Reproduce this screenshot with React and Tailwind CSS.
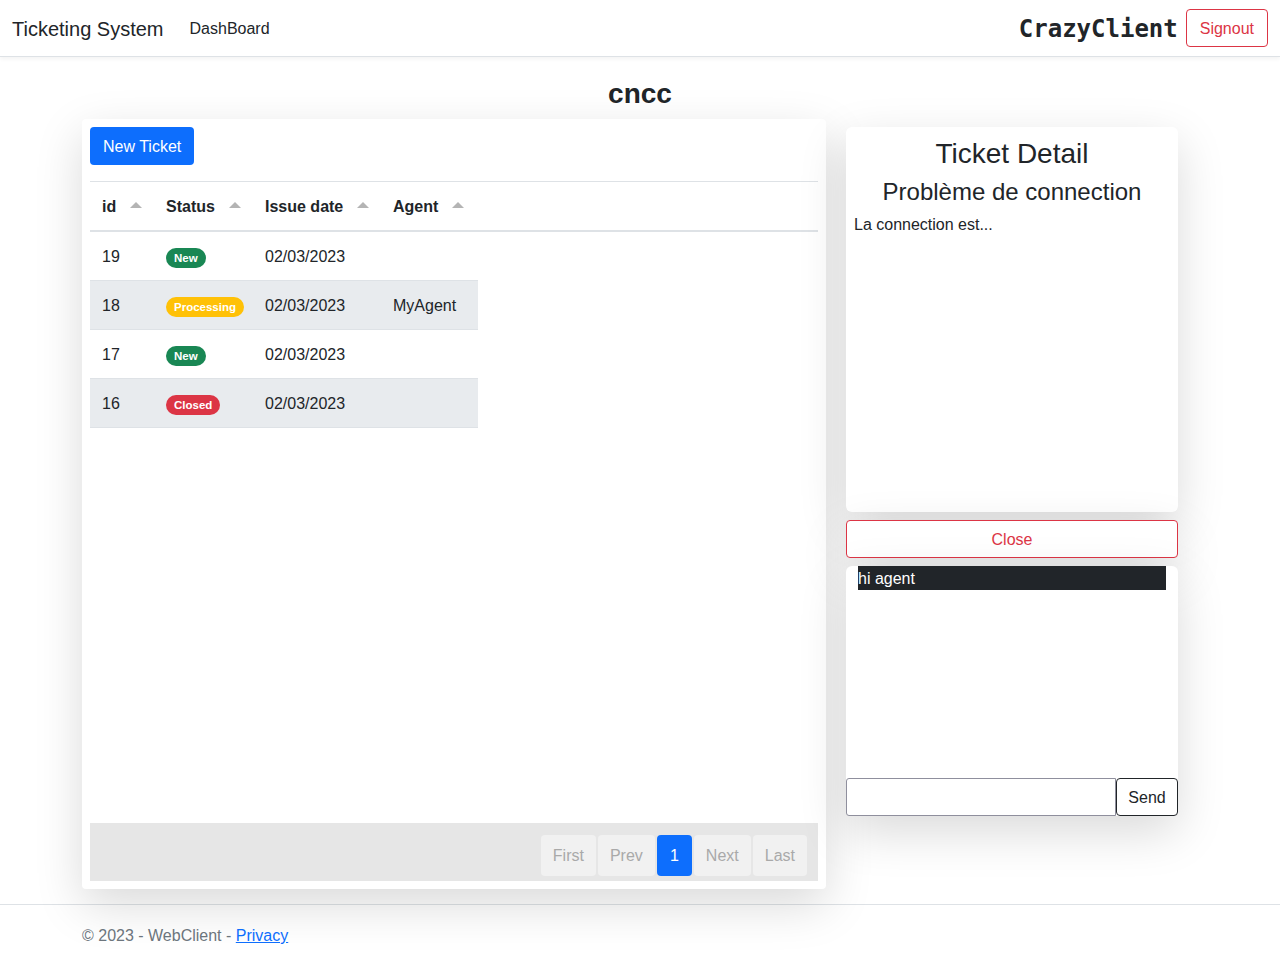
import React from 'react';

const rows = [
  { id: 19, status: 'New', date: '02/03/2023', agent: '' },
  { id: 18, status: 'Processing', date: '02/03/2023', agent: 'MyAgent' },
  { id: 17, status: 'New', date: '02/03/2023', agent: '' },
  { id: 16, status: 'Closed', date: '02/03/2023', agent: '' },
];

const badgeClass = {
  New: 'bg-[#198754]',
  Processing: 'bg-[#ffc107]',
  Closed: 'bg-[#dc3545]',
};

function SortArrow() {
  return (
    <span className="inline-block ml-[14px] align-middle w-0 h-0 border-l-[6px] border-r-[6px] border-b-[6px] border-l-transparent border-r-transparent border-b-[#b4b4b4] relative -top-[2px]" />
  );
}

export default function App() {
  return (
    <div className="min-h-screen bg-white text-[#212529] font-['Liberation_Sans',Arial,sans-serif] text-base">
      {/* Navbar */}
      <nav className="h-[57px] flex items-center justify-between px-3 border-b border-[#dee2e6] shadow-[0_2px_4px_rgba(0,0,0,0.05)]">
        <div className="flex items-center pt-px">
          <span className="text-xl mr-4">Ticketing System</span>
          <span className="px-2 ml-[2px] text-[#212529]">DashBoard</span>
        </div>
        <div className="flex items-center">
          <span className="font-['DejaVu_Sans_Mono','Liberation_Mono',monospace] font-bold text-[24px] mr-2 pt-px">CrazyClient</span>
          <button className="h-[38px] px-[13px] pt-px border border-[#dc3545] text-[#dc3545] rounded-[4px] text-base">Signout</button>
        </div>
      </nav>

      <main className="w-[1116px] mx-auto">
        <h3 className="text-center text-[28px] font-bold leading-[34px] pt-[20px]">cncc</h3>
        <div className="flex items-start">
          {/* Left card */}
          <div className="w-[744px] mt-[8px] h-[770px] p-2 bg-white rounded-[4px] shadow-[0_1rem_3rem_rgba(0,0,0,0.15)] flex flex-col">
            <div>
              <button className="h-[38px] px-[13px] pt-px bg-[#0d6efd] text-white rounded-[4px]">New Ticket</button>
            </div>
            <div className="mt-4 h-[642px] border-t border-[#dee2e6]">
              <div className="h-[50px] flex items-center pt-px font-bold border-b-2 border-[#dee2e6]">
                <div className="w-[64px] pl-3">id<SortArrow /></div>
                <div className="w-[99px] pl-3">Status<SortArrow /></div>
                <div className="w-[128px] pl-3">Issue date<SortArrow /></div>
                <div className="w-[97px] pl-3">Agent<SortArrow /></div>
              </div>
              <div className="w-[388px]">
                {rows.map((r, i) => (
                  <div
                    key={r.id}
                    className={`h-[49px] flex items-center pt-px border-b border-[#dee2e6] ${i % 2 === 1 ? 'bg-[#e8ebee]' : 'bg-white'}`}
                  >
                    <div className="w-[64px] pl-3">{r.id}</div>
                    <div className="w-[99px] pl-3">
                      <span className={`inline-block rounded-full px-[8px] py-[3px] text-[11.5px] leading-[14px] font-bold text-white ${badgeClass[r.status]}`}>
                        {r.status}
                      </span>
                    </div>
                    <div className="w-[128px] pl-3">{r.date}</div>
                    <div className="w-[97px] pl-3">{r.agent}</div>
                  </div>
                ))}
              </div>
            </div>
            {/* Pagination */}
            <div className="h-[58px] bg-[#e6e6e6] flex justify-end items-start pt-3 pr-[11px] gap-[2px]">
              <span className="h-[41px] px-[12px] pt-px flex items-center bg-[#f1f1f1] text-[#a9a9a9] rounded-[4px]">First</span>
              <span className="h-[41px] px-[12px] pt-px flex items-center bg-[#f1f1f1] text-[#a9a9a9] rounded-[4px]">Prev</span>
              <span className="h-[41px] w-[35px] pt-px justify-center flex items-center bg-[#0d6efd] text-white rounded-[4px]">1</span>
              <span className="h-[41px] px-[12px] pt-px flex items-center bg-[#f1f1f1] text-[#a9a9a9] rounded-[4px]">Next</span>
              <span className="h-[41px] px-[12px] pt-px flex items-center bg-[#f1f1f1] text-[#a9a9a9] rounded-[4px]">Last</span>
            </div>
          </div>

          {/* Right column */}
          <div className="w-[332px] ml-[20px] mt-[16px] flex flex-col">
            <div className="h-[385px] bg-white rounded-[6px] shadow-[0_1rem_3rem_rgba(0,0,0,0.15)] px-2 pt-[10px]">
              <h3 className="text-center text-[28px] leading-[34px] font-medium">Ticket Detail</h3>
              <h4 className="text-center text-[24px] leading-[29px] font-medium mt-[6px]">Problème de connection</h4>
              <p className="mt-[7px] leading-6">La connection est...</p>
            </div>
            <button className="mt-2 h-[38px] w-full pt-px border border-[#dc3545] text-[#dc3545] rounded-[4px] bg-white shadow-[0_1rem_3rem_rgba(0,0,0,0.15)]">
              Close
            </button>
            <div className="mt-2 h-[250px] bg-white rounded-[6px] shadow-[0_1rem_3rem_rgba(0,0,0,0.15)] flex flex-col">
              <div className="flex-1 px-3">
                <div className="h-6 bg-[#212529] text-white leading-6 pt-px">hi agent</div>
              </div>
              <div className="flex h-[38px]">
                <input className="flex-1 min-w-0 border border-[#8f8f9d] rounded-l-[3px] bg-white" />
                <button className="w-[62px] pt-px border border-[#212529] rounded-[4px] bg-white">Send</button>
              </div>
            </div>
          </div>
        </div>
      </main>

      <footer className="mt-[15px] border-t border-[#dee2e6] leading-[60px] text-[#6c757d]">
        <div className="w-[1116px] mx-auto pt-px">
          © 2023 - WebClient - <a href="#" className="text-[#0d6efd] underline">Privacy</a>
        </div>
      </footer>
    </div>
  );
}
